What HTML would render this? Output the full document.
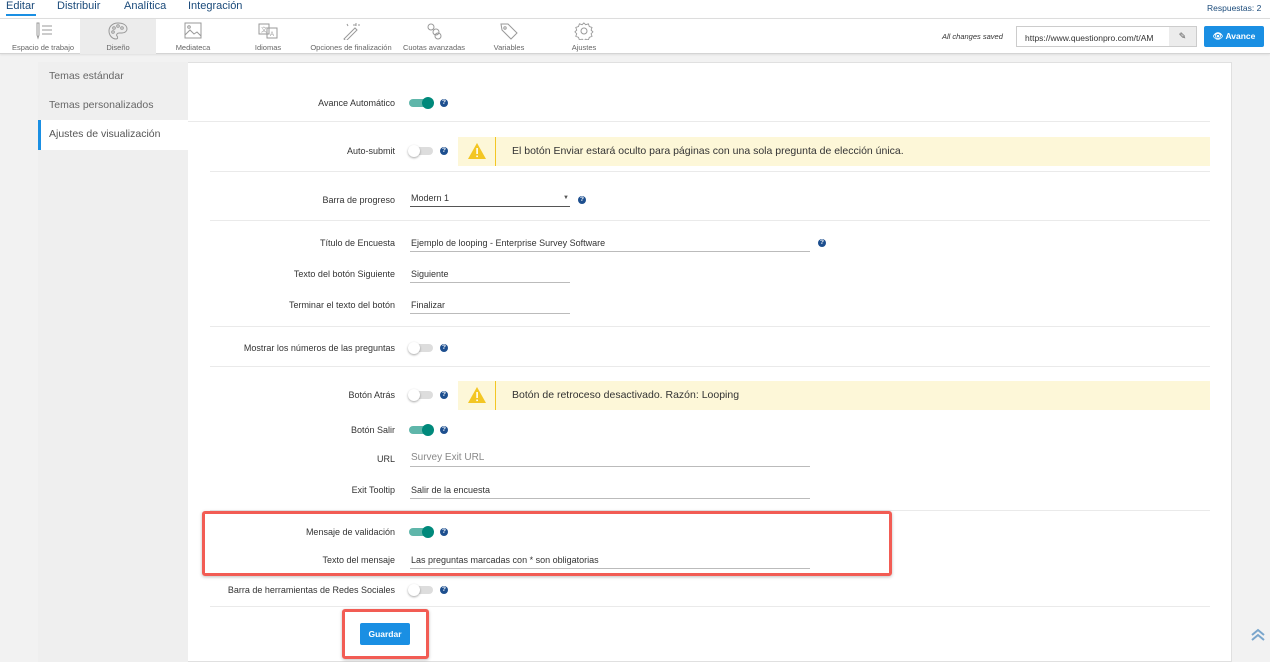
<!DOCTYPE html>
<html><head><meta charset="utf-8"><style>
*{margin:0;padding:0;box-sizing:border-box}
body{width:1270px;height:656px;overflow:hidden;background:#f2f2f2;font-family:"Liberation Sans",sans-serif;position:relative;color:#333}
.a{position:absolute}
.top{left:0;top:0;width:1270px;height:18px;background:#fff}
.top span{position:absolute;top:0;font-size:11px;color:#1a4a7a}
.tabs{left:0;top:18px;width:1270px;height:36px;background:#fff;border-top:1px solid #ddd;border-bottom:1px solid #d4d4d4;box-shadow:0 1px 2px rgba(0,0,0,.08)}
.tab{position:absolute;top:0;height:35px;width:76px;text-align:center;font-size:7.5px;color:#666}
.tab svg{display:block;margin:3px auto 0}
.tab div{position:absolute;left:0;right:0;top:24px;white-space:nowrap}
.panel{left:38px;top:62px;width:1194px;height:600px;background:#fff;border:1px solid #e0e0e0}
.side{left:38px;top:62px;width:150px;height:600px;background:#efefef}
.side div{position:absolute;left:11px;font-size:10.5px;color:#666}
.lbl{position:absolute;right:875px;font-size:9px;color:#333;white-space:nowrap;text-align:right}
.sep{position:absolute;left:210px;width:1000px;height:1px;background:#eaeaea}
.tg{position:absolute;left:409px;width:24px;height:8px;border-radius:4px}
.tg.on{background:#5fb6aa}
.tg.off{background:#ddd}
.tg i{position:absolute;top:-2px;width:12px;height:12px;border-radius:50%}
.tg.on i{right:-1px;background:#00897b}
.tg.off i{left:-1px;background:#fff;box-shadow:0 1px 2px rgba(0,0,0,.35)}
.q{position:absolute;width:8px;height:8px;border-radius:50%;background:#1d4f8f;color:#fff;font-size:6.5px;font-weight:bold;text-align:center;line-height:8px}
.inp{position:absolute;left:410px;height:16px;padding-top:2px;border-bottom:1px solid #bbb;font-size:9px;color:#333;padding-left:1px}
.warn{position:absolute;left:458px;width:752px;height:29px;background:#fdf7d8}
.warn .ic{position:absolute;left:0;top:0;width:38px;height:29px;border-right:1.5px solid #f3c623}
.warn span{position:absolute;left:54px;top:8px;font-size:10.5px;color:#333}
.red{position:absolute;border:3.5px solid #f25c54;border-radius:3px;box-shadow:0 1px 3px rgba(0,0,0,.25)}
</style></head><body>
<div class="a top">
<span style="left:6px;color:#1a4a7a">Editar</span>
<div class="a" style="left:6px;top:14px;width:30px;height:2px;background:#1a8fe3"></div>
<span style="left:57px">Distribuir</span>
<span style="left:124px">Analítica</span>
<span style="left:188px">Integración</span>
<span style="left:1207px;font-size:8.5px;top:3px">Respuestas: 2</span>
</div>
<div class="a tabs">
<div class="tab" style="left:5px"><svg width="22" height="18" viewBox="0 0 22 18" fill="none" stroke="#999" stroke-width="1"><path d="M5 1v12l1 3 1-3V1z"/><path d="M10 4h10M10 8h10M10 12h10"/></svg><div>Espacio de trabajo</div></div>
<div class="tab" style="left:80px;background:#ececec"><svg width="20" height="18" viewBox="0 0 20 18" fill="none" stroke="#999" stroke-width="1"><path d="M10 1C4 1 1 5 1 9s3 8 7 8c2 0 2-2 1-3s0-3 2-3h3c3 0 5-2 5-4 0-4-4-6-9-6z"/><circle cx="6" cy="6" r="1.3"/><circle cx="10" cy="4" r="1.3"/><circle cx="14" cy="6" r="1.3"/><circle cx="5" cy="10" r="1.3"/></svg><div>Diseño</div></div>
<div class="tab" style="left:155px"><svg width="20" height="18" viewBox="0 0 20 18" fill="none" stroke="#999" stroke-width="1"><rect x="2" y="1" width="16" height="15"/><path d="M2 13l5-5 4 4 3-2 4 4"/><circle cx="6" cy="5" r="1.3"/></svg><div>Mediateca</div></div>
<div class="tab" style="left:230px"><svg width="22" height="18" viewBox="0 0 22 18" fill="none" stroke="#999" stroke-width="1"><rect x="2" y="2" width="10" height="10"/><rect x="10" y="6" width="10" height="10"/><text x="4" y="10" font-size="6" fill="#999" stroke="none">文</text><text x="13" y="14" font-size="6" fill="#999" stroke="none">A</text></svg><div>Idiomas</div></div>
<div class="tab" style="left:305px;width:92px"><svg width="20" height="18" viewBox="0 0 20 18" fill="none" stroke="#999" stroke-width="1"><path d="M3 17L14 6l2 2L5 19z"/><path d="M15 1v3M12 3h3M17 3h2M6 2l1 2"/></svg><div>Opciones de finalización</div></div>
<div class="tab" style="left:396px"><svg width="20" height="18" viewBox="0 0 20 18" fill="none" stroke="#999" stroke-width="1"><circle cx="7" cy="5" r="3"/><circle cx="12" cy="10" r="3"/><circle cx="14" cy="14" r="3"/></svg><div>Cuotas avanzadas</div></div>
<div class="tab" style="left:471px"><svg width="20" height="18" viewBox="0 0 20 18" fill="none" stroke="#999" stroke-width="1"><path d="M2 2h7l9 9-6 6-9-9z"/><circle cx="6" cy="6" r="1.2"/></svg><div>Variables</div></div>
<div class="tab" style="left:546px"><svg width="20" height="18" viewBox="0 0 20 18" fill="none" stroke="#999" stroke-width="1"><circle cx="10" cy="9" r="3"/><path d="M10 1l2 2 3-1 1 3 3 1-1 3 2 2-2 2 1 3-3 1-1 3-3-1-2 2-2-2-3 1-1-3-3-1 1-3-2-2 2-2-1-3 3-1 1-3 3 1z" transform="scale(.9) translate(1 0)"/></svg><div>Ajustes</div></div>
<div class="a" style="left:942px;top:13px;font-size:7.5px;font-style:italic;color:#333">All changes saved</div>
<div class="a" style="left:1016px;top:7px;width:181px;height:21px;border:1px solid #ccc;background:#fff;font-size:8.5px;padding:6px 0 0 8px;overflow:hidden;white-space:nowrap;color:#333">https://www.questionpro.com/t/AM</div>
<div class="a" style="left:1169px;top:8px;width:27px;height:19px;background:#ececec;font-size:9px;text-align:center;line-height:19px;color:#555">✎</div>
<div class="a" style="left:1204px;top:7px;width:60px;height:21px;background:#1a8fe3;border-radius:2px;color:#fff;font-size:8.5px;font-weight:bold;text-align:center;line-height:21px">👁 Avance</div>
</div>
<div class="a panel"></div>
<div class="a side">
<div style="top:8px">Temas estándar</div>
<div style="top:37px">Temas personalizados</div>
<div style="left:0;top:58px;width:150px;height:30px;background:#fff;border-left:3px solid #1a8fe3"></div>
<div style="top:66px;color:#555">Ajustes de visualización</div>
</div>
<div class="sep" style="left:188px;top:121px;width:1022px"></div>
<div class="sep" style="top:171px"></div><div class="sep" style="top:220px"></div><div class="sep" style="top:326px"></div><div class="sep" style="top:366px"></div><div class="sep" style="top:510px"></div><div class="sep" style="top:606px"></div>

<div class="lbl" style="top:98px">Avance Automático</div><div class="tg on" style="top:99px"><i></i></div><div class="q" style="left:440px;top:99px">?</div>
<div class="lbl" style="top:146px">Auto-submit</div><div class="tg off" style="top:147px"><i></i></div><div class="q" style="left:440px;top:147px">?</div>
<div class="warn" style="top:137px"><div class="ic"><svg width="38" height="29"><path d="M19 6l9 16H10z" fill="#f3c623"/><rect x="18.3" y="11" width="1.6" height="6" fill="#fff"/><rect x="18.3" y="18.5" width="1.6" height="1.6" fill="#fff"/></svg></div><span>El botón Enviar estará oculto para páginas con una sola pregunta de elección única.</span></div>

<div class="lbl" style="top:195px">Barra de progreso</div>
<div class="inp" style="top:191px;width:160px;border-bottom-color:#555">Modern 1<span style="position:absolute;right:1px;top:4px;font-size:6px;color:#555">▼</span></div><div class="q" style="left:578px;top:196px">?</div>
<div class="lbl" style="top:238px">Título de Encuesta</div><div class="inp" style="top:236px;width:400px">Ejemplo de looping - Enterprise Survey Software</div><div class="q" style="left:818px;top:239px">?</div>
<div class="lbl" style="top:269px">Texto del botón Siguiente</div><div class="inp" style="top:267px;width:160px">Siguiente</div>
<div class="lbl" style="top:300px">Terminar el texto del botón</div><div class="inp" style="top:298px;width:160px">Finalizar</div>
<div class="lbl" style="top:343px">Mostrar los números de las preguntas</div><div class="tg off" style="top:344px"><i></i></div><div class="q" style="left:440px;top:344px">?</div>
<div class="lbl" style="top:390px">Botón Atrás</div><div class="tg off" style="top:391px"><i></i></div><div class="q" style="left:440px;top:391px">?</div>
<div class="warn" style="top:381px"><div class="ic"><svg width="38" height="29"><path d="M19 6l9 16H10z" fill="#f3c623"/><rect x="18.3" y="11" width="1.6" height="6" fill="#fff"/><rect x="18.3" y="18.5" width="1.6" height="1.6" fill="#fff"/></svg></div><span>Botón de retroceso desactivado. Razón: Looping</span></div>
<div class="lbl" style="top:425px">Botón Salir</div><div class="tg on" style="top:426px"><i></i></div><div class="q" style="left:440px;top:426px">?</div>
<div class="lbl" style="top:454px">URL</div><div class="inp" style="top:450px;width:400px;height:17px;color:#888;font-size:10px">Survey Exit URL</div>
<div class="lbl" style="top:485px">Exit Tooltip</div><div class="inp" style="top:483px;width:400px">Salir de la encuesta</div>
<div class="lbl" style="top:527px">Mensaje de validación</div><div class="tg on" style="top:528px"><i></i></div><div class="q" style="left:440px;top:528px">?</div>
<div class="lbl" style="top:555px">Texto del mensaje</div><div class="inp" style="top:553px;width:400px">Las preguntas marcadas con * son obligatorias</div>
<div class="lbl" style="top:585px">Barra de herramientas de Redes Sociales</div><div class="tg off" style="top:586px"><i></i></div><div class="q" style="left:440px;top:586px">?</div>
<div class="a" style="left:360px;top:623px;width:50px;height:22px;background:#1a8fe3;border-radius:2px;color:#fff;font-size:8.5px;font-weight:bold;text-align:center;line-height:22px">Guardar</div>
<div class="red" style="left:202px;top:511px;width:690px;height:65px"></div>
<div class="red" style="left:342px;top:609px;width:87px;height:50px"></div>
<svg class="a" style="left:1250px;top:627px" width="16" height="14" fill="none" stroke="#7aa6cc" stroke-width="2"><path d="M2 8l6-5 6 5M2 13l6-5 6 5"/></svg>
</body></html>
